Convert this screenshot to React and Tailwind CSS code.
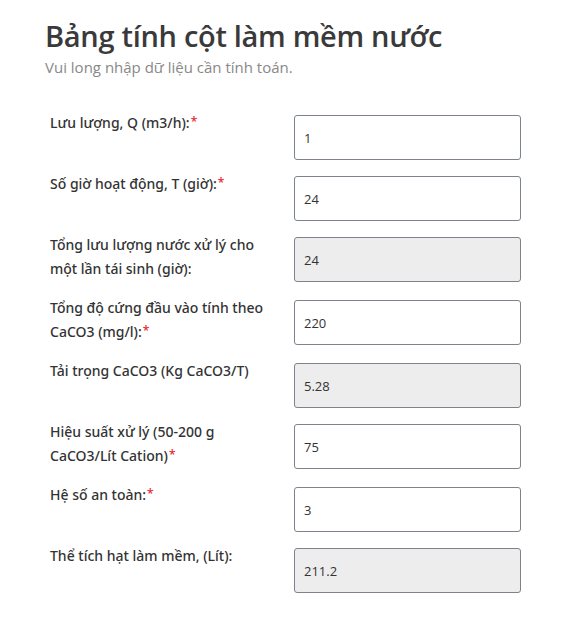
const FIELDS = [
  { label: "Lưu lượng, Q (m3/h):", value: "1", required: true },
  { label: "Số giờ hoạt động, T (giờ):", value: "24", required: true },
  { label: "Tổng lưu lượng nước xử lý cho một lần tái sinh (giờ):", value: "24", readOnly: true },
  { label: "Tổng độ cứng đầu vào tính theo CaCO3 (mg/l):", value: "220", required: true },
  { label: "Tải trọng CaCO3 (Kg CaCO3/T)", value: "5.28", readOnly: true },
  { label: "Hiệu suất xử lý (50-200 g CaCO3/Lít Cation)", value: "75", required: true },
  { label: "Hệ số an toàn:", value: "3", required: true },
  { label: "Thể tích hạt làm mềm, (Lít):", value: "211.2", readOnly: true },
];

const REQ =
  "after:content-['*'] after:inline-block after:align-top after:ml-px after:text-[#e8262a] after:text-[12px] after:leading-[21px]";

export default function App() {
  return (
    <div className="min-h-[628px] bg-white px-[45px] pt-[19px] font-['Open_Sans',sans-serif] text-[#333]">
      <h1 className="text-[29px] leading-[34px] font-semibold text-[#3a3a3a] tracking-[-0.3px]">Bảng tính cột làm mềm nước</h1>
      <p className="mt-[4px] text-[15px] leading-[20px] text-[#888] mb-[38px]">Vui long nhập dữ liệu cần tính toán.</p>

      <div className="pl-[5px] space-y-4">
        {FIELDS.map((f, i) => (
          <div key={i} className="flex items-start">
            <label
              className={`w-[230px] -mt-[4px] pb-[4px] font-['Noto_Sans',sans-serif] text-[14px] leading-[23.5px] font-medium text-[#333] mr-[14px] ${
                f.required ? REQ : ""
              }`}
            >
              {f.label}
            </label>
            <input
              readOnly
              value={f.value}
              className={`w-[227px] h-[45px] px-[9px] text-[13px] text-[#333] border border-[#7d838b] rounded-[3px] outline-none ${
                f.readOnly ? "bg-[#ededed]" : "bg-white"
              }`}
            />
          </div>
        ))}
      </div>
    </div>
  );
}
